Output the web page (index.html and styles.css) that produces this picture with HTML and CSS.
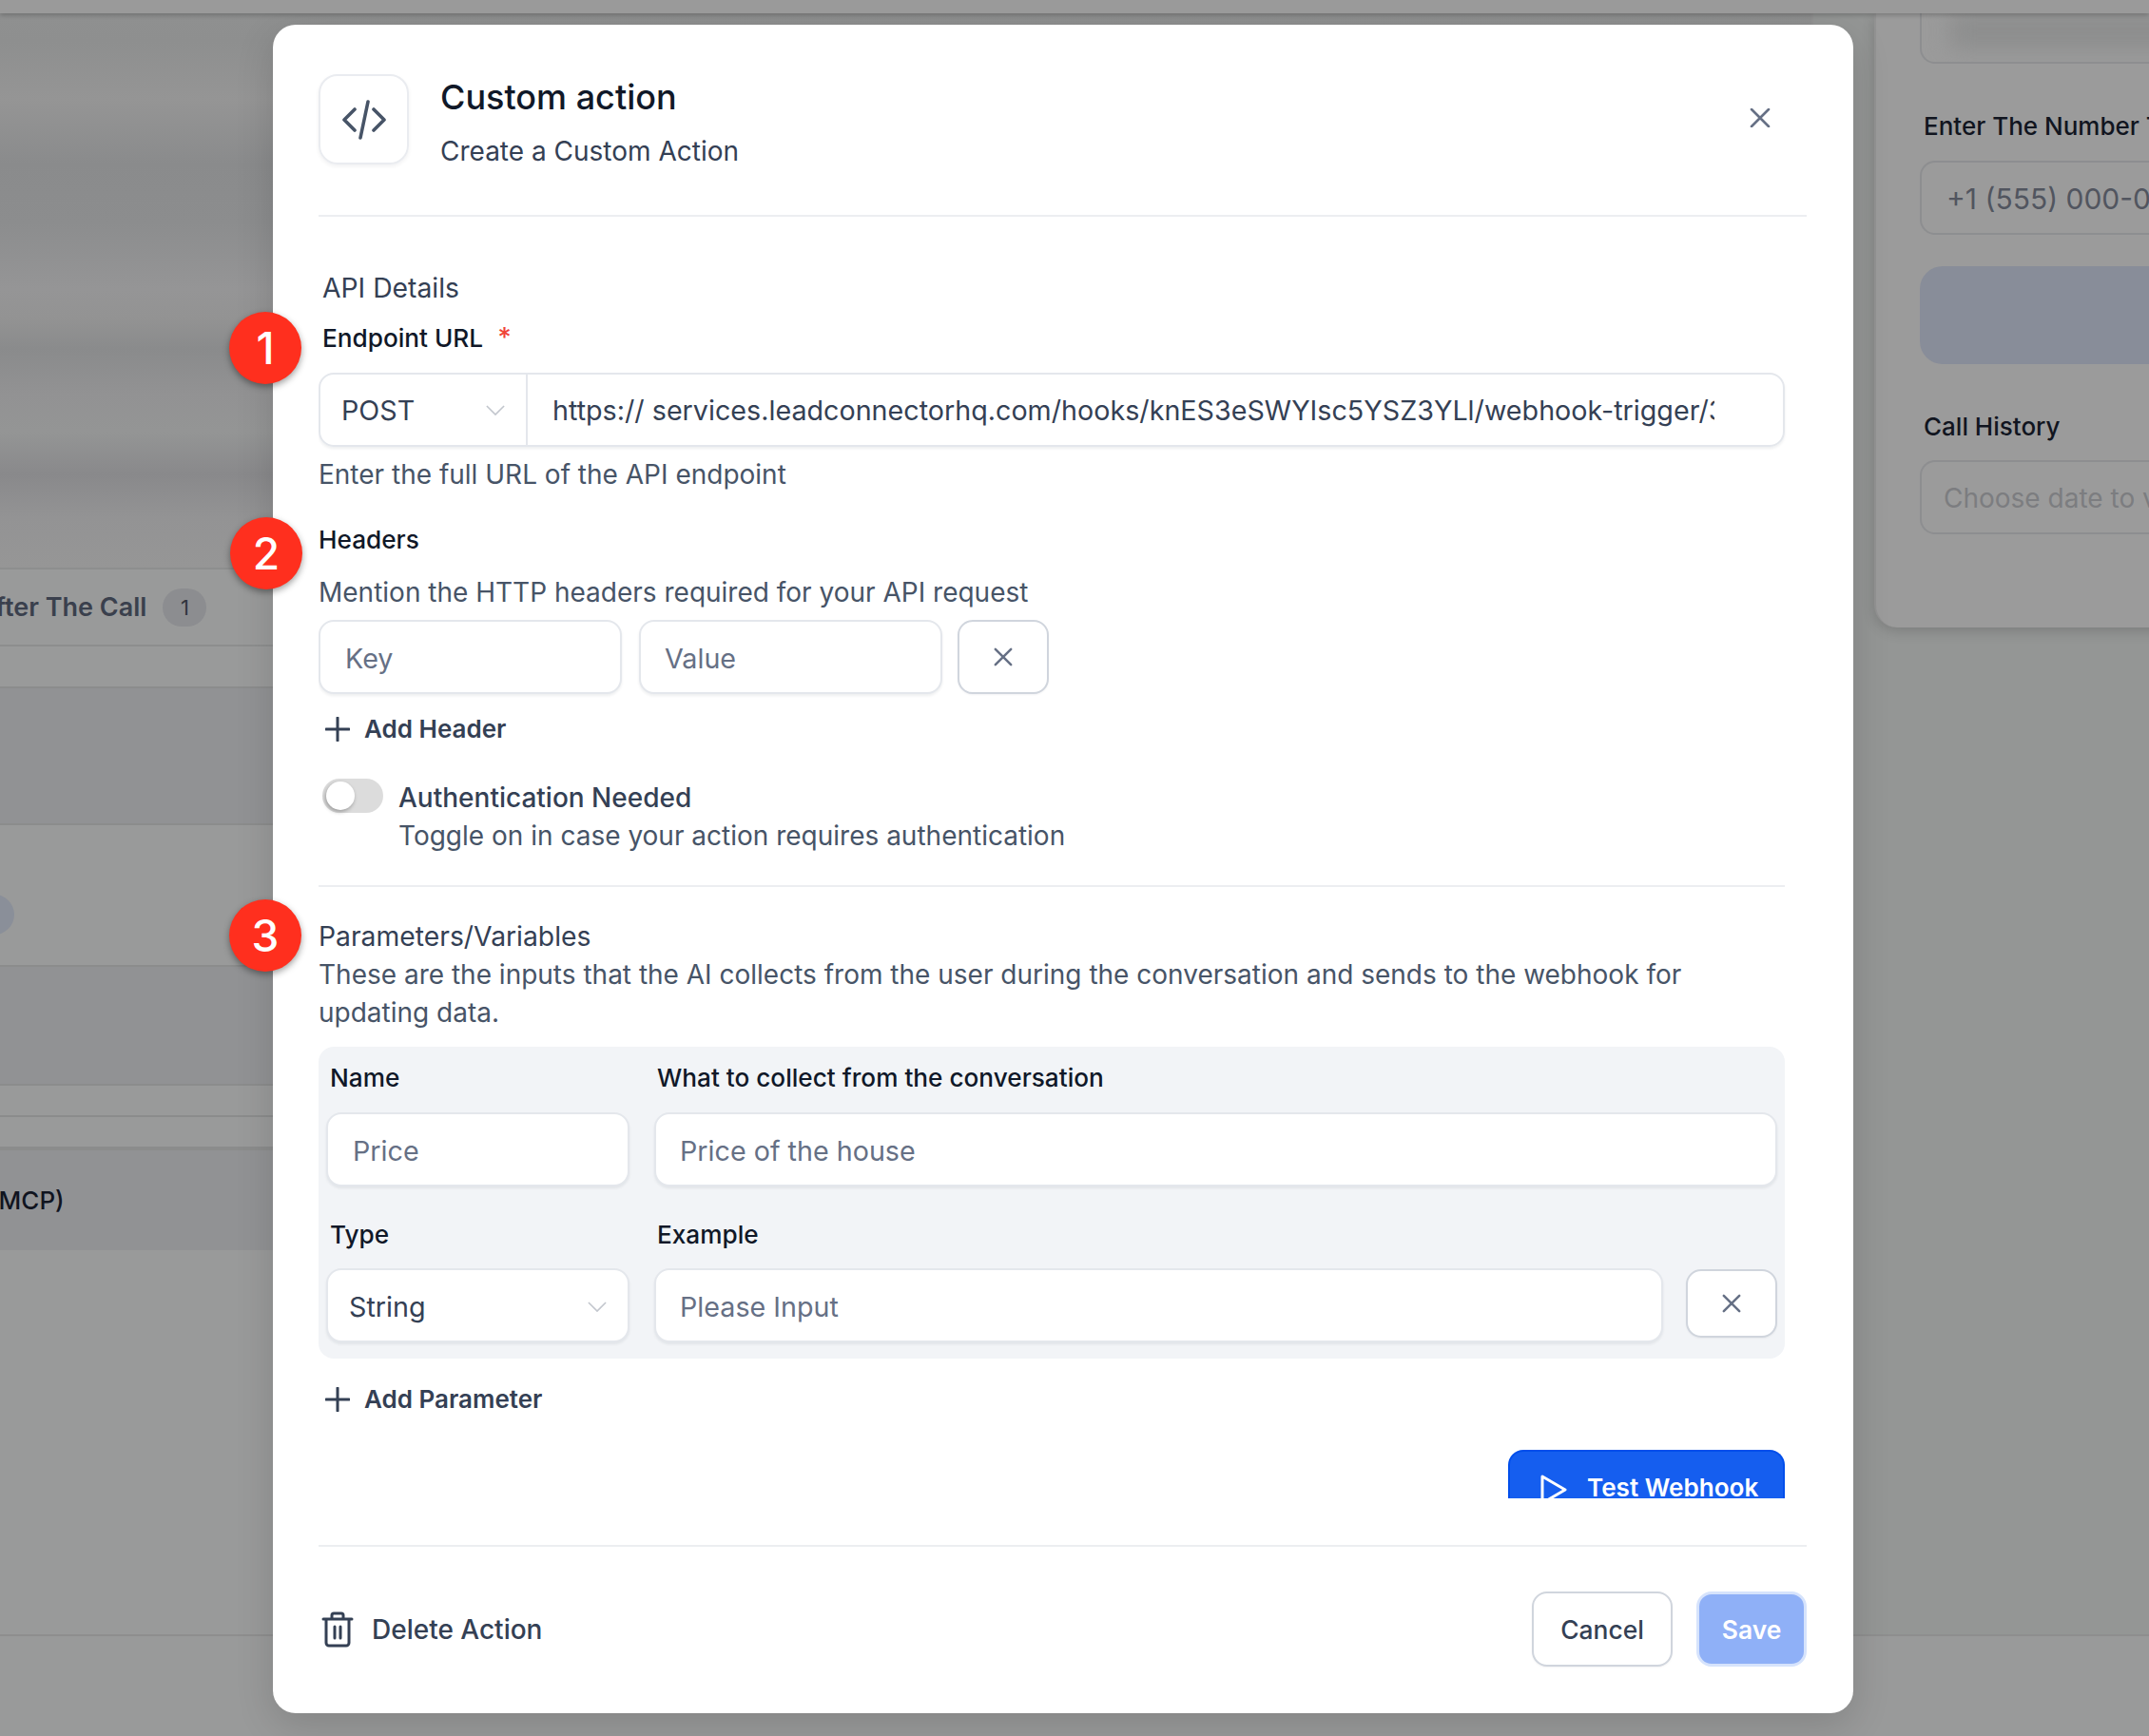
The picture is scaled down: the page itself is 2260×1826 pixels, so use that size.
FILE: index.html
```html
<!DOCTYPE html>
<html lang="en">
<head>
<meta charset="utf-8">
<title>Custom action</title>
<link rel="stylesheet" href="styles.css">
</head>
<body>
<div class="page">
  <div class="topbar"></div>
  <div class="stage">
    <div class="left">
      <div class="band"></div>
      <div class="bg-row row-after"><span class="after-text">After The Call</span><span class="count">1</span></div>
      <div class="bg-gap-a"></div>
      <div class="bg-shade shade-a"></div>
      <div class="bg-gap-b"><span class="pill"></span></div>
      <div class="bg-shade shade-b"></div>
      <div class="bg-line line-a"></div>
      <div class="bg-line line-b"></div>
      <div class="bg-shade shade-c"><span class="mcp-text">(MCP)</span></div>
    </div>
    <div class="right">
      <div class="card">
        <div class="bg-input first-input"><span class="smear"></span></div>
        <div class="bg-label label-number">Enter The Number To Call</div>
        <div class="bg-input"><span class="phone">+1 (555) 000-0000</span></div>
        <div class="bg-button"></div>
        <div class="bg-label label-history">Call History</div>
        <div class="bg-input"><span class="choose">Choose date to view</span></div>
      </div>
    </div>
  </div>

  <div class="modal">
    <header class="modal-head">
      <div class="code-tile">
        <svg class="code-icon" viewBox="0 0 46 42" fill="none" stroke="#475467" stroke-width="3.6" stroke-linecap="round" stroke-linejoin="round"><path d="M13 10 2 21l11 11M33 10l11 11-11 11M27 2l-8 38"/></svg>
      </div>
      <div class="head-text">
        <div class="title">Custom action</div>
        <div class="subtitle">Create a Custom Action</div>
      </div>
      <svg class="close-icon" viewBox="0 0 22 20" fill="none" stroke="#667085" stroke-width="2.6" stroke-linecap="round"><path d="M2 1l18 18M20 1 2 19"/></svg>
    </header>
    <div class="rule head-rule"></div>

    <div class="modal-body">
      <div class="txt section-name">API Details</div>
      <div class="txt strong endpoint-label">Endpoint URL <span class="req">*</span></div>
      <div class="url-group">
        <div class="method">POST
          <svg class="chev" viewBox="0 0 22 12" fill="none" stroke="#c2c6cd" stroke-width="1.8"><path d="M1 1l10 10L21 1"/></svg>
        </div>
        <div class="url"><span class="url-clip">https:// services.leadconnectorhq.com/hooks/knES3eSWYIsc5YSZ3YLl/webhook-trigger/3a1f7c92-6b0e</span></div>
      </div>
      <div class="txt hint">Enter the full URL of the API endpoint</div>
      <div class="txt strong headers-label">Headers</div>
      <div class="txt hint mention">Mention the HTTP headers required for your API request</div>
      <div class="header-row">
        <div class="field key">Key</div>
        <div class="field value">Value</div>
        <div class="x-btn">
          <svg class="x-icon" viewBox="0 0 22 22" fill="none" stroke="#667085" stroke-width="2.8" stroke-linecap="round"><path d="M2 2l18 18M20 2 2 20"/></svg>
        </div>
      </div>
      <div class="add add-header">
        <svg class="plus" viewBox="0 0 26 26" fill="none" stroke="#344054" stroke-width="3" stroke-linecap="round"><path d="M13 1v24M1 13h24"/></svg>
        Add Header
      </div>
      <div class="auth">
        <div class="toggle"><span class="knob"></span></div>
        <div class="auth-text">
          <div class="txt auth-title">Authentication Needed</div>
          <div class="txt hint">Toggle on in case your action requires authentication</div>
        </div>
      </div>
      <div class="rule body-rule"></div>
      <div class="txt section-name params-name">Parameters/Variables</div>
      <div class="txt hint">These are the inputs that the AI collects from the user during the conversation and sends to the webhook for updating data.</div>

      <div class="panel">
        <div class="panel-labels">
          <div class="txt strong col-a">Name</div>
          <div class="txt strong">What to collect from the conversation</div>
        </div>
        <div class="panel-fields">
          <div class="field col-field">Price</div>
          <div class="field grow">Price of the house</div>
        </div>
        <div class="panel-labels second">
          <div class="txt strong col-a">Type</div>
          <div class="txt strong">Example</div>
        </div>
        <div class="panel-fields type-fields">
          <div class="field col-field select-field">String
            <svg class="chev" viewBox="0 0 22 12" fill="none" stroke="#c2c6cd" stroke-width="1.8"><path d="M1 1l10 10L21 1"/></svg>
          </div>
          <div class="field grow">Please Input</div>
          <div class="x-btn param-x">
            <svg class="x-icon" viewBox="0 0 22 22" fill="none" stroke="#667085" stroke-width="2.8" stroke-linecap="round"><path d="M2 2l18 18M20 2 2 20"/></svg>
          </div>
        </div>
      </div>

      <div class="add add-param">
        <svg class="plus" viewBox="0 0 26 26" fill="none" stroke="#344054" stroke-width="3" stroke-linecap="round"><path d="M13 1v24M1 13h24"/></svg>
        Add Parameter
      </div>
      <div class="test-row">
        <div class="test-btn">
          <svg class="play" viewBox="0 0 28 32" fill="none" stroke="#fff" stroke-width="3" stroke-linejoin="round"><path d="M2 2l24 14L2 30z"/></svg>
          <span class="test-label">Test Webhook</span>
        </div>
      </div>
    </div>

    <div class="rule foot-rule"></div>
    <footer class="modal-foot">
      <div class="delete">
        <svg class="trash" viewBox="0 0 34 38" fill="none" stroke="#344054" stroke-width="3" stroke-linecap="round" stroke-linejoin="round"><path d="M2 8h30M5 8v25a3 3 0 0 0 3 3h18a3 3 0 0 0 3-3V8M11 8V4a2 2 0 0 1 2-2h8a2 2 0 0 1 2 2v4M14 16v12M20 16v12"/></svg>
        Delete Action
      </div>
      <div class="foot-buttons">
        <div class="btn cancel">Cancel</div>
        <div class="btn save">Save</div>
      </div>
    </footer>

    <div class="marker marker-one">1</div>
    <div class="marker marker-two">2</div>
    <div class="marker marker-three">3</div>
  </div>
</div>
</body>
</html>
```

FILE: styles.css
```css
* { box-sizing: border-box; }
html, body { margin: 0; padding: 0; }
body { font-family: Inter, "Noto Sans", sans-serif; background: #989898; }

.page { position: relative; width: 2260px; height: 1826px; overflow: hidden; background: #999a9a; }

/* dimmed page behind the dialog */
.topbar { height: 14px; background: #9a9a9a; box-shadow: 0 2px 5px rgba(0,0,0,.22); position: relative; z-index: 1; }
.stage { display: flex; height: 1707px; border-bottom: 2px solid #8e8e8e; }
.left { width: 1907px; flex: none; display: flex; flex-direction: column; border-right: 2px solid #929292; overflow: hidden; }
.band { height: 583px; background: linear-gradient(180deg, #8f9090 0, #8e8f8f 30px, #959595 90px, #8a8b8c 158px, #8c8d8e 220px, #959596 290px, #939393 320px, #8a8b8c 353px, #929293 400px, #949595 440px, #89898b 485px, #939394 530px, #969696 583px); }
.bg-row { height: 83px; display: flex; align-items: center; gap: 17px; border-top: 2px solid #8d8e8e; border-bottom: 2px solid #8d8e8e; }
.after-text { font-size: 27px; font-weight: 600; color: #3a404d; margin-left: -24px; white-space: nowrap; }
.count { width: 46px; height: 40px; border-radius: 20px; background: #8c8d90; color: #30343d; font-size: 22px; display: flex; align-items: center; justify-content: center; }
.bg-gap-a { height: 42px; }
.bg-shade { background: #919294; border-top: 2px solid #8b8c8c; border-bottom: 2px solid #8b8c8c; }
.shade-a { height: 146px; }
.bg-gap-b { height: 147px; display: flex; align-items: flex-end; padding-bottom: 32px; }
.pill { display: block; width: 45px; height: 42px; margin-left: -30px; border-radius: 21px; background: #8a8f99; }
.shade-b { height: 127px; }
.bg-line { height: 34px; border-bottom: 2px solid #8b8c8c; }
.line-a, .line-b { height: 33px; }
.shade-c { height: 107px; display: flex; align-items: center; border-bottom: 0; }
.mcp-text { font-size: 26px; font-weight: 500; color: #10141f; margin-left: -11px; white-space: nowrap; }

.right { flex: 1; padding-left: 64px; background: #949695; min-width: 0; }
.card { height: 646px; width: 500px; background: #9b9b9b; padding-left: 48px; border-radius: 0 0 0 24px; box-shadow: 0 4px 14px rgba(0,0,0,.16); border-left: 2px solid #929292; }
.bg-input { height: 78px; border: 2px solid #8d8e90; border-right: 0; border-radius: 16px 0 0 16px; display: flex; align-items: center; font-size: 30px; white-space: nowrap; margin-left: -2px; overflow: hidden; padding-top: 2px; }
.first-input { height: 53px; border-top: 0; border-radius: 0 0 0 16px; align-items: stretch; padding-top: 0; }
.smear { display: block; width: 100%; margin: 0 0 14px 30px; background: #8c8d8d; filter: blur(12px); }
.bg-label { font-size: 26px; line-height: 40px; font-weight: 500; color: #11151f; margin-left: 2px; white-space: nowrap; }
.label-number { margin-top: 46px; margin-bottom: 16px; }
.phone { color: #51555f; margin-left: 26px; }
.choose { color: #7c7d80; margin-left: 23px; font-size: 28px; }
.bg-button { height: 103px; margin: 33px 0 0 -2px; background: #888d99; border-radius: 24px 0 0 24px; }
.label-history { margin-top: 46px; margin-bottom: 15px; }

/* dialog */
.modal { position: absolute; left: 287px; top: 26px; width: 1662px; height: 1776px; background: #fff; border-radius: 24px; box-shadow: 0 12px 40px rgba(0,0,0,.14); display: flex; flex-direction: column; padding: 0 49px 0 48px; color: #344054; }
.modal-head { display: flex; height: 146px; padding-top: 52px; align-items: flex-start; flex: none; }
.code-tile { width: 95px; height: 95px; border: 2px solid #eaecf0; border-radius: 20px; box-shadow: 0 2px 4px rgba(16,24,40,.06); display: flex; align-items: center; justify-content: center; flex: none; }
.code-icon { width: 46px; height: 42px; }
.head-text { margin-left: 33px; }
.title { font-size: 36px; line-height: 48px; font-weight: 500; color: #101828; }
.subtitle { font-size: 28px; line-height: 40px; margin-top: 13px; color: #344054; }
.close-icon { width: 22px; height: 20px; margin-left: auto; margin-top: 36px; margin-right: 38px; flex: none; }

.rule { background: #eceef1; height: 2px; flex: none; }
.head-rule { margin-top: 54px; }
.modal-body { height: 1348px; flex: none; overflow: hidden; padding: 55px 23px 0 0; }

.txt { font-size: 28px; line-height: 40px; }
.strong { font-size: 26.2px; font-weight: 550; color: #101828; }
.section-name { margin-left: 4px; color: #344054; font-size: 28.3px; }
.endpoint-label { margin: 13px 0 0 4px; height: 40px; }
.req { color: #f04438; margin-left: 8px; font-size: 28px; line-height: 1; font-weight: 500; }
.url-group { display: flex; height: 78px; margin-top: 16px; border: 2px solid #e4e7ec; border-radius: 16px; box-shadow: 0 2px 3px rgba(16,24,40,.07); }
.method { width: 218px; flex: none; border-right: 2px solid #e4e7ec; display: flex; align-items: center; justify-content: space-between; padding: 1px 22px 0 22px; font-size: 28.7px; color: #344054; }
.chev { width: 20px; height: 11px; flex: none; }
.url { flex: 1; min-width: 0; padding: 1px 72px 0 26px; display: flex; align-items: center; font-size: 28.7px; color: #344054; }
.url-clip { display: block; overflow: hidden; white-space: nowrap; line-height: 40px; }
.hint { color: #475467; margin-top: 9px; }
.headers-label { margin-top: 29px; }
.mention { margin-top: 15px; }
.header-row { display: flex; gap: 18px; margin-top: 9px; width: 767px; }
.field { height: 78px; border: 2px solid #e4e7ec; border-radius: 16px; background: #fff; box-shadow: 0 2px 3px rgba(16,24,40,.07); display: flex; align-items: center; padding: 2px 26px 0; font-size: 28.7px; color: #667085; }
.key, .value { width: 319px; flex: none; }
.value { margin-right: -2px; padding-left: 25px; }
.x-btn { width: 96px; height: 78px; flex: none; border: 2px solid #d0d5dd; border-radius: 16px; background: #fff; box-shadow: 0 1px 2px rgba(16,24,40,.05); display: flex; align-items: center; justify-content: center; }
.x-icon { width: 20px; height: 20px; }
.add { display: flex; align-items: center; font-size: 26px; line-height: 40px; font-weight: 600; color: #344054; padding-left: 7px; }
.plus { width: 26px; height: 26px; margin-right: 15px; flex: none; }
.add-header { margin-top: 17px; }
.auth { display: flex; margin-top: 32px; padding-left: 4px; }
.toggle { width: 64px; height: 36px; border-radius: 18px; background: #dcdcdc; padding: 3px 4px; flex: none; }
.knob { display: block; width: 30px; height: 30px; border-radius: 50%; background: #fff; box-shadow: -1px 2px 4px rgba(0,0,0,.3); }
.auth-text { margin-left: 16px; }
.auth-title { color: #344054; font-weight: 500; }
.auth-text .hint { margin-top: 0; }
.body-rule { margin-top: 32px; }
.params-name { margin: 32px 0 0 0; }
.params-name + .hint { margin-top: 0; padding-right: 60px; }

.panel { margin-top: 16px; height: 328px; background: #f2f4f7; border-radius: 16px; padding: 13px 8px 0 8px; }
.panel-labels { display: flex; padding-left: 4px; }
.col-a { width: 344px; flex: none; }
.second { margin-top: 31px; }
.panel-fields { display: flex; gap: 26px; margin-top: 16px; }
.type-fields { margin-top: 15px; }
.col-field { width: 319px; flex: none; }
.grow { flex: 1; min-width: 0; padding-left: 25px; }
.select-field { color: #344054; padding-left: 22px; justify-content: space-between; padding-right: 22px; }
.param-x { height: 72px; margin: 1px 0 0 -2px; }

.add-param { margin-top: 23px; }
.test-row { display: flex; justify-content: flex-end; margin-top: 33px; }
.test-btn { width: 291px; height: 78px; background: #155eef; border: 2px solid #004eeb; border-bottom: 0; border-radius: 16px; display: flex; align-items: center; padding: 0 0 0 32px; font-size: 26.1px; font-weight: 600; color: #fff; }
.play { width: 28px; height: 32px; margin: 4px 21px 0 0; flex: none; }
.test-label { margin-top: -2px; }

.foot-rule { margin-top: 49px; }
.modal-foot { display: flex; align-items: flex-start; justify-content: space-between; padding-top: 47px; }
.delete { display: flex; align-items: center; height: 79px; padding-left: 3px; font-size: 28px; font-weight: 500; color: #344054; }
.trash { width: 34px; height: 38px; margin-right: 19px; flex: none; }
.foot-buttons { display: flex; gap: 25px; }
.btn { height: 79px; border-radius: 16px; display: flex; align-items: center; justify-content: center; font-size: 26.4px; font-weight: 500; }
.cancel { width: 148px; border: 2px solid #d0d5dd; background: #fff; color: #344054; box-shadow: 0 1px 2px rgba(16,24,40,.05); }
.save { width: 116px; background: #8fb0f7; border: 3px solid #d6e3fc; color: #fff; font-weight: 600; }

/* numbered callouts over the dialog edge */
.marker { position: absolute; width: 76px; height: 76px; border-radius: 50%; background: #ff2f1e; color: #fff; font-size: 46px; font-weight: 500; display: flex; align-items: center; justify-content: center; box-shadow: 0 3px 7px rgba(0,0,0,.38); }
.marker-one { left: -46px; top: 302px; }
.marker-two { left: -45px; top: 518px; }
.marker-three { left: -46px; top: 920px; }
```
